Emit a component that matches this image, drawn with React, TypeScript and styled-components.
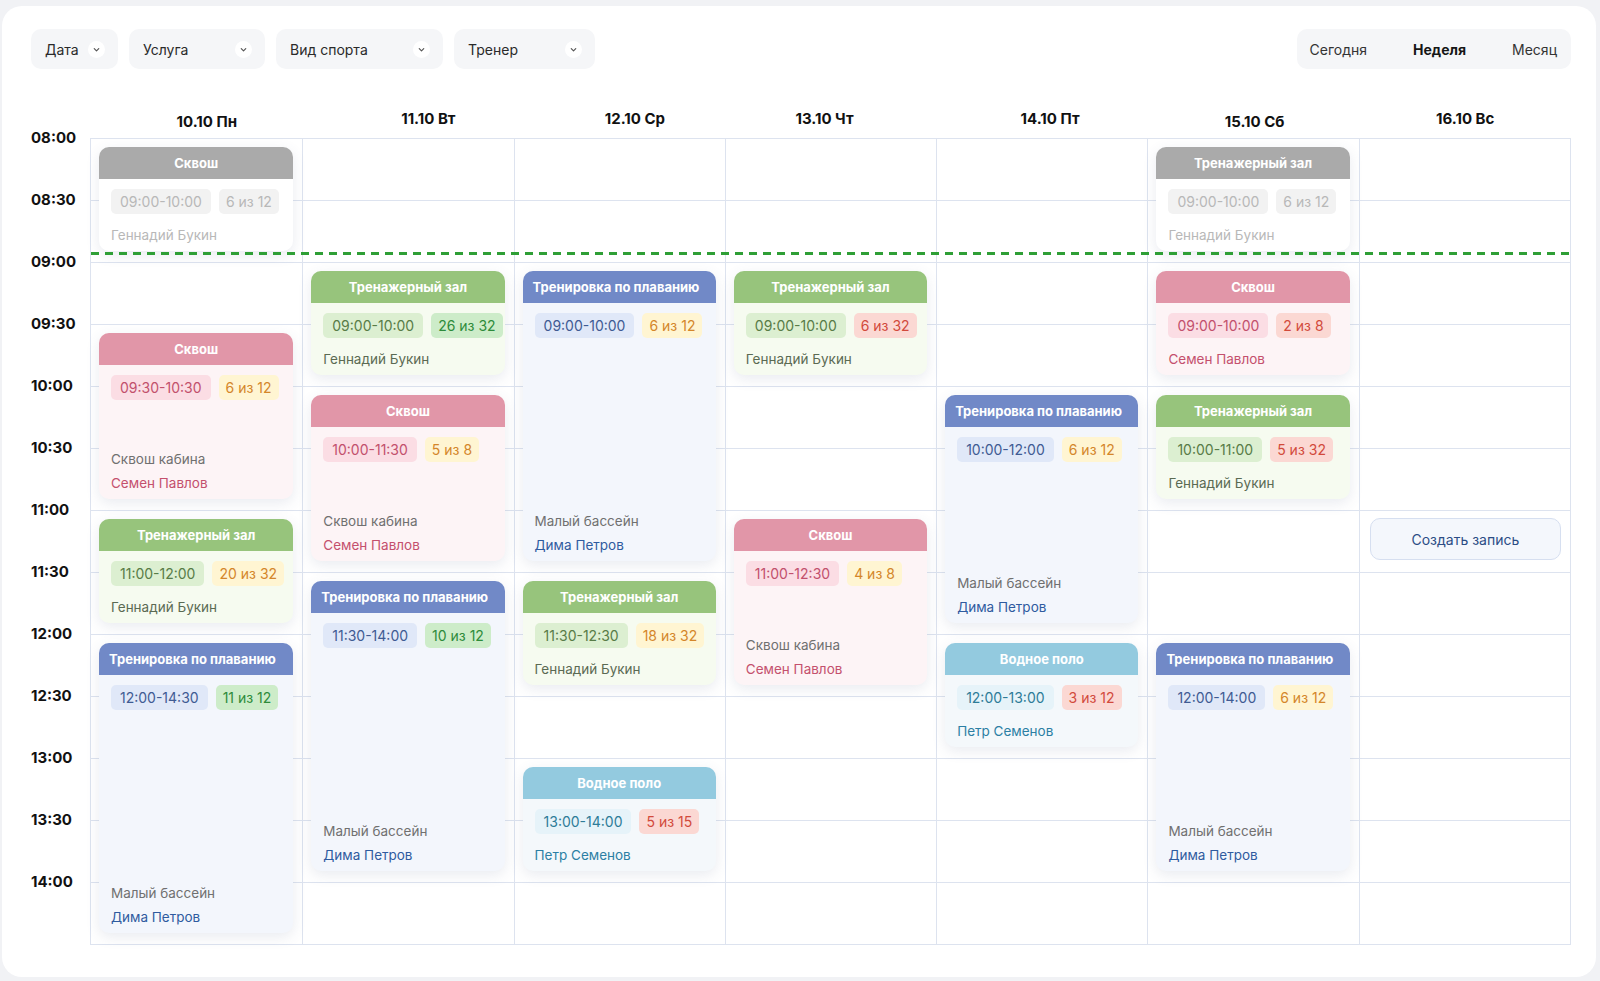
import React from "react";
import styled, { createGlobalStyle } from "styled-components";

type Kind = "gray" | "green" | "pink" | "swim" | "water";
type Tone = "gray" | "green" | "yellow" | "red";

type EventType = {
    kind: Kind;
    title: string;
    time: string;
    count: string;
    tone: Tone;
    room?: string;
    person: string;
    slot: number;
    span: number;
};

type DayType = {
    label: string;
    low?: boolean;
    shift: number;
    events: EventType[];
    create?: number;
};

const ROW = 62;
const ROWS = 13;

const kinds: Record<Kind, { head: string; body: string; chipBg: string; chipFg: string; person: string; room: string }> = {
    gray: { head: "#aaaaaa", body: "#ffffff", chipBg: "#f2f2f2", chipFg: "#b8b8b8", person: "#b8b8b8", room: "#b8b8b8" },
    green: { head: "#97c47c", body: "#f6fbf0", chipBg: "#dcefd1", chipFg: "#587c47", person: "#5b6a53", room: "#707070" },
    pink: { head: "#e196a8", body: "#fdf4f6", chipBg: "#fbdde4", chipFg: "#c2506c", person: "#c4506d", room: "#707070" },
    swim: { head: "#7189c7", body: "#f3f6fc", chipBg: "#e0e8f8", chipFg: "#3f5b93", person: "#2f5b9f", room: "#707070" },
    water: { head: "#93cadf", body: "#f4f8fb", chipBg: "#e6f3f9", chipFg: "#2e7c98", person: "#2c7fa4", room: "#707070" },
};

const tones: Record<Tone, { bg: string; fg: string }> = {
    gray: { bg: "#f2f2f2", fg: "#b8b8b8" },
    green: { bg: "#cdecc9", fg: "#2e8b3b" },
    yellow: { bg: "#fff5d2", fg: "#d4862a" },
    red: { bg: "#fbd8d3", fg: "#d24a3c" },
};

const GYM = "Тренажерный зал";
const SWIM = "Тренировка по плаванию";
const SQUASH = "Сквош";
const POLO = "Водное поло";
const BUKIN = "Геннадий Букин";
const PAVLOV = "Семен Павлов";
const PETROV = "Дима Петров";
const SEMENOV = "Петр Семенов";
const CABIN = "Сквош кабина";
const POOL = "Малый бассейн";

const days: DayType[] = [
    {
        label: "10.10 Пн",
        low: true,
        shift: 11,
        events: [
            { kind: "gray", title: SQUASH, time: "09:00-10:00", count: "6 из 12", tone: "gray", person: BUKIN, slot: 0, span: 2 },
            { kind: "pink", title: SQUASH, time: "09:30-10:30", count: "6 из 12", tone: "yellow", room: CABIN, person: PAVLOV, slot: 3, span: 3 },
            { kind: "green", title: GYM, time: "11:00-12:00", count: "20 из 32", tone: "yellow", person: BUKIN, slot: 6, span: 2 },
            { kind: "swim", title: SWIM, time: "12:00-14:30", count: "11 из 12", tone: "green", room: POOL, person: PETROV, slot: 8, span: 5 },
        ],
    },
    {
        label: "11.10 Вт",
        shift: 21,
        events: [
            { kind: "green", title: GYM, time: "09:00-10:00", count: "26 из 32", tone: "green", person: BUKIN, slot: 2, span: 2 },
            { kind: "pink", title: SQUASH, time: "10:00-11:30", count: "5 из 8", tone: "yellow", room: CABIN, person: PAVLOV, slot: 4, span: 3 },
            { kind: "swim", title: SWIM, time: "11:30-14:00", count: "10 из 12", tone: "green", room: POOL, person: PETROV, slot: 7, span: 5 },
        ],
    },
    {
        label: "12.10 Ср",
        shift: 16,
        events: [
            { kind: "swim", title: SWIM, time: "09:00-10:00", count: "6 из 12", tone: "yellow", room: POOL, person: PETROV, slot: 2, span: 5 },
            { kind: "green", title: GYM, time: "11:30-12:30", count: "18 из 32", tone: "yellow", person: BUKIN, slot: 7, span: 2 },
            { kind: "water", title: POLO, time: "13:00-14:00", count: "5 из 15", tone: "red", person: SEMENOV, slot: 10, span: 2 },
        ],
    },
    {
        label: "13.10 Чт",
        shift: -6,
        events: [
            { kind: "green", title: GYM, time: "09:00-10:00", count: "6 из 32", tone: "red", person: BUKIN, slot: 2, span: 2 },
            { kind: "pink", title: SQUASH, time: "11:00-12:30", count: "4 из 8", tone: "yellow", room: CABIN, person: PAVLOV, slot: 6, span: 3 },
        ],
    },
    {
        label: "14.10 Пт",
        shift: 8,
        events: [
            { kind: "swim", title: SWIM, time: "10:00-12:00", count: "6 из 12", tone: "yellow", room: POOL, person: PETROV, slot: 4, span: 4 },
            { kind: "water", title: POLO, time: "12:00-13:00", count: "3 из 12", tone: "red", person: SEMENOV, slot: 8, span: 2 },
        ],
    },
    {
        label: "15.10 Сб",
        low: true,
        shift: 1,
        events: [
            { kind: "gray", title: GYM, time: "09:00-10:00", count: "6 из 12", tone: "gray", person: BUKIN, slot: 0, span: 2 },
            { kind: "pink", title: SQUASH, time: "09:00-10:00", count: "2 из 8", tone: "red", person: PAVLOV, slot: 2, span: 2 },
            { kind: "green", title: GYM, time: "10:00-11:00", count: "5 из 32", tone: "red", person: BUKIN, slot: 4, span: 2 },
            { kind: "swim", title: SWIM, time: "12:00-14:00", count: "6 из 12", tone: "yellow", room: POOL, person: PETROV, slot: 8, span: 4 },
        ],
    },
    { label: "16.10 Вс", shift: 0, events: [], create: 6 },
];

const hours = ["08:00", "08:30", "09:00", "09:30", "10:00", "10:30", "11:00", "11:30", "12:00", "12:30", "13:00", "13:30", "14:00"];

const GlobalStyle = createGlobalStyle`
  html, body {
    margin: 0;
    padding: 0;
    background: #f1f2f5;
  }
  body {
    font-family: Inter, "Noto Sans", "Liberation Sans", sans-serif;
    color: #161616;
  }
  * { box-sizing: border-box; }
`;

const Page = styled.div`
    padding: 6px 4px 6px 2px;
`;

const Panel = styled.div`
    background: #fff;
    border-radius: 20px;
    padding: 23px 25px 32px 29px;
`;

const Toolbar = styled.div`
    display: flex;
    justify-content: space-between;
    align-items: center;
    margin-bottom: 33px;
`;

const Filters = styled.div`
    display: flex;
    gap: 11px;
`;

const Filter = styled.button<{ $width: number }>`
    width: ${(p) => p.$width}px;
    height: 40px;
    display: flex;
    align-items: center;
    justify-content: space-between;
    padding: 0 13px 0 14px;
    border: none;
    border-radius: 10px;
    background: #f5f6f8;
    font: 400 14px Inter, "Noto Sans", sans-serif;
    color: #2a2a2a;
`;

const Chevron = styled.span`
    width: 17px;
    height: 17px;
    border-radius: 50%;
    background: #fff;
    display: flex;
    align-items: center;
    justify-content: center;
`;

const Views = styled.div`
    height: 40px;
    display: flex;
    align-items: center;
    gap: 46px;
    padding: 0 14px 0 13px;
    border-radius: 10px;
    background: #f5f6f8;
`;

const ViewItem = styled.span<{ $active?: boolean }>`
    font-size: 14px;
    font-weight: ${(p) => (p.$active ? 700 : 400)};
    color: ${(p) => (p.$active ? "#161616" : "#333")};
`;

const Schedule = styled.div`
    display: grid;
    grid-template-columns: 59px 1fr;
    grid-template-rows: 36px auto;
`;

const DayHeads = styled.div`
    display: grid;
    grid-template-columns: repeat(7, 1fr);
`;

// shift nudges the label off the column centre, as the header is drawn
const DayHead = styled.div<{ $low?: boolean; $shift: number }>`
    display: flex;
    align-items: flex-end;
    justify-content: center;
    padding-bottom: ${(p) => (p.$low ? 7 : 10)}px;
    padding-left: ${(p) => Math.max(0, p.$shift * 2)}px;
    padding-right: ${(p) => Math.max(0, -p.$shift * 2)}px;
    font-size: 15px;
    font-weight: 700;
    color: #111;
`;

const TimeCol = styled.div`
    display: grid;
    grid-template-rows: repeat(${ROWS}, ${ROW}px);
`;

const TimeLabel = styled.div`
    font-size: 15px;
    font-weight: 700;
    line-height: 20px;
    margin-top: -10px;
    color: #111;
`;

const Board = styled.div`
    position: relative;
    display: grid;
    grid-template-columns: repeat(7, minmax(0, 1fr));
    border: 1px solid #dde3ef;
    border-top: none;
    background-image: linear-gradient(#dde3ef 1px, transparent 1px);
    background-size: 100% ${ROW}px;
`;

const DayCol = styled.div`
    display: grid;
    grid-template-columns: minmax(0, 1fr);
    grid-template-rows: repeat(${ROWS}, ${ROW}px);
    & + & {
        border-left: 1px solid #dde3ef;
    }
`;

const NowLine = styled.div`
    position: absolute;
    left: 0;
    right: 0;
    top: 114px;
    height: 3px;
    z-index: 3;
    background: repeating-linear-gradient(to right, #2f9f36 0 8px, transparent 8px 14px);
`;

const Card = styled.div<{ $kind: Kind; $slot: number; $span: number }>`
    grid-row: ${(p) => p.$slot + 1} / span ${(p) => p.$span};
    grid-column: 1;
    margin: 9px 9px 11px 8px;
    display: flex;
    flex-direction: column;
    border-radius: 10px;
    background: ${(p) => kinds[p.$kind].body};
    box-shadow: 0 4px 14px rgba(70, 90, 130, 0.12);
    overflow: hidden;
    position: relative;
    z-index: 1;
`;

const CardHead = styled.div<{ $kind: Kind; $left?: boolean }>`
    height: 32px;
    flex-shrink: 0;
    display: flex;
    align-items: center;
    justify-content: ${(p) => (p.$left ? "flex-start" : "center")};
    padding: 0 10px;
    background: ${(p) => kinds[p.$kind].head};
    color: #fff;
    font-size: 13px;
    font-weight: 700;
    white-space: nowrap;
`;

const CardBody = styled.div`
    flex: 1;
    display: flex;
    flex-direction: column;
    padding: 10px 12px 6px 12px;
`;

const Chips = styled.div`
    display: flex;
    gap: 8px;
    margin-bottom: 11px;
`;

const Chip = styled.span<{ $bg: string; $fg: string; $pad: number }>`
    height: 25px;
    display: inline-flex;
    align-items: center;
    padding: 0 ${(p) => p.$pad}px;
    border-radius: 5px;
    background: ${(p) => p.$bg};
    color: ${(p) => p.$fg};
    font-size: 14px;
    white-space: nowrap;
`;

const Footer = styled.div`
    margin-top: auto;
    display: flex;
    flex-direction: column;
    gap: 4px;
`;

const Line = styled.div<{ $color: string }>`
    font-size: 13.5px;
    line-height: 20px;
    color: ${(p) => p.$color};
    white-space: nowrap;
`;

const CreateButton = styled.button<{ $slot: number }>`
    grid-row: ${(p) => p.$slot + 1} / span 1;
    grid-column: 1;
    align-self: start;
    margin: 8px 9px 0 10px;
    height: 42px;
    border: 1px solid #d6dff0;
    border-radius: 10px;
    background: #f4f7fc;
    color: #2c4d85;
    font: 400 14px Inter, "Noto Sans", sans-serif;
`;

const ChevronIcon = () => (
    <svg width="9" height="9" viewBox="0 0 10 10">
        <path d="M2.5 4l2.5 2.5L7.5 4" fill="none" stroke="#555" strokeWidth="1.3" strokeLinecap="round" strokeLinejoin="round" />
    </svg>
);

const EventCard = ({ ev }: { ev: EventType }) => {
    const k = kinds[ev.kind];
    const t = tones[ev.tone];
    return (
        <Card $kind={ev.kind} $slot={ev.slot} $span={ev.span}>
            <CardHead $kind={ev.kind} $left={ev.title === SWIM}>
                {ev.title}
            </CardHead>
            <CardBody>
                <Chips>
                    <Chip $bg={k.chipBg} $fg={k.chipFg} $pad={9}>
                        {ev.time}
                    </Chip>
                    <Chip $bg={t.bg} $fg={t.fg} $pad={7}>
                        {ev.count}
                    </Chip>
                </Chips>
                <Footer>
                    {ev.room && <Line $color={k.room}>{ev.room}</Line>}
                    <Line $color={k.person}>{ev.person}</Line>
                </Footer>
            </CardBody>
        </Card>
    );
};

const filters = [
    { name: "Дата", width: 87 },
    { name: "Услуга", width: 136 },
    { name: "Вид спорта", width: 167 },
    { name: "Тренер", width: 141 },
];

export default function App() {
    return (
        <Page>
            <GlobalStyle />
            <Panel>
                <Toolbar>
                    <Filters>
                        {filters.map((f) => (
                            <Filter key={f.name} $width={f.width}>
                                {f.name}
                                <Chevron>
                                    <ChevronIcon />
                                </Chevron>
                            </Filter>
                        ))}
                    </Filters>
                    <Views>
                        <ViewItem>Сегодня</ViewItem>
                        <ViewItem $active>Неделя</ViewItem>
                        <ViewItem>Месяц</ViewItem>
                    </Views>
                </Toolbar>
                <Schedule>
                    <div />
                    <DayHeads>
                        {days.map((d) => (
                            <DayHead key={d.label} $low={d.low} $shift={d.shift}>
                                {d.label}
                            </DayHead>
                        ))}
                    </DayHeads>
                    <TimeCol>
                        {hours.map((h) => (
                            <TimeLabel key={h}>{h}</TimeLabel>
                        ))}
                    </TimeCol>
                    <Board>
                        {days.map((d) => (
                            <DayCol key={d.label}>
                                {d.events.map((ev, i) => (
                                    <EventCard key={i} ev={ev} />
                                ))}
                                {d.create !== undefined && <CreateButton $slot={d.create}>Создать запись</CreateButton>}
                            </DayCol>
                        ))}
                        <NowLine />
                    </Board>
                </Schedule>
            </Panel>
        </Page>
    );
}
